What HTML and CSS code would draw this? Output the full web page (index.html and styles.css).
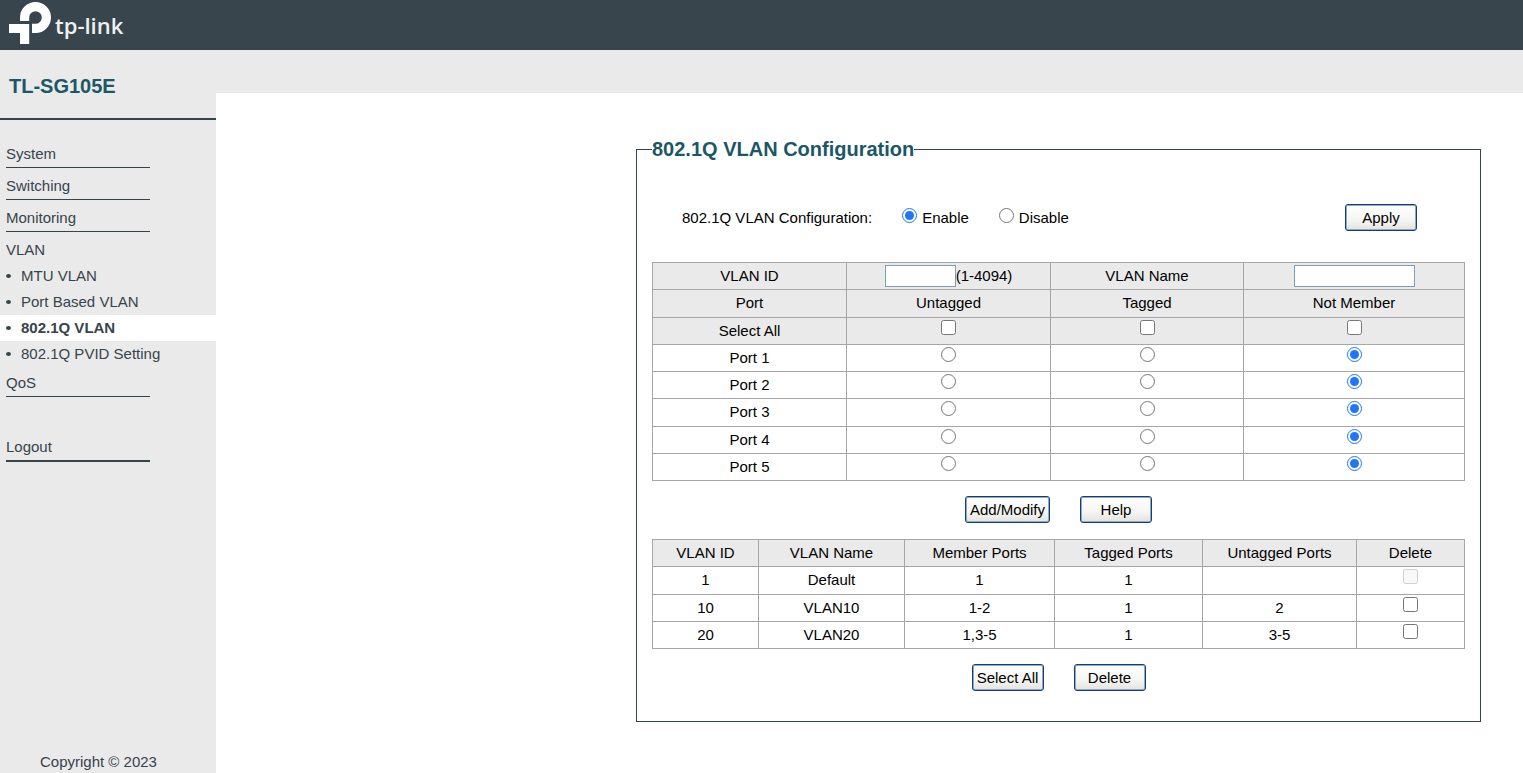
FILE: index.html
```html
<!DOCTYPE html>
<html lang="en">
<head>
<meta charset="utf-8">
<title>TL-SG105E</title>
<link rel="stylesheet" href="styles.css">
</head>
<body>
<header class="topbar">
  <svg class="logo-mark" viewBox="0 0 42 42" width="42" height="42" aria-hidden="true">
    <path fill="#fff" d="M11 19V15.500a15.500 15.500 0 1 1 15.500 15.500H23V21.800H26.500a6.300 6.300 0 1 0-6.300-6.300V19zM0 22H20.200V42H11V31H0z"/>
  </svg>
  <span class="logo-name">tp-link</span>
</header>
<div class="layout">
  <aside class="sidebar">
    <h1 class="model">TL-SG105E</h1>
    <nav class="nav">
      <a class="item" href="#">System</a>
      <a class="item" href="#">Switching</a>
      <a class="item" href="#">Monitoring</a>
      <a class="item open" href="#">VLAN</a>
      <ul class="sub">
        <li><a href="#">MTU VLAN</a></li>
        <li><a href="#">Port Based VLAN</a></li>
        <li class="current"><a href="#">802.1Q VLAN</a></li>
        <li><a href="#">802.1Q PVID Setting</a></li>
      </ul>
      <a class="item after-sub" href="#">QoS</a>
      <a class="item logout" href="#">Logout</a>
    </nav>
    <p class="copyright">Copyright © 2023</p>
  </aside>
  <main class="main">
    <div class="band"></div>
    <form class="content">
      <fieldset class="panel">
        <legend>802.1Q VLAN Configuration</legend>
        <div class="mode">
          <span class="mode-label">802.1Q VLAN Configuration:</span>
          <label class="choice"><input type="radio" name="mode" checked> Enable</label>
          <label class="choice"><input type="radio" name="mode"> Disable</label>
          <button class="btn apply" type="button">Apply</button>
        </div>
        <table class="grid ports">
          <colgroup><col class="p1"><col class="p2"><col class="p3"><col class="p4"></colgroup>
          <tbody>
            <tr class="head"><td><label for="vid">VLAN ID</label></td><td><div class="field"><input class="text short" id="vid" type="text"><span>(1-4094)</span></div></td><td><label for="vname">VLAN Name</label></td><td><div class="field"><input class="text" id="vname" type="text"></div></td></tr>
            <tr class="head"><th>Port</th><th>Untagged</th><th>Tagged</th><th>Not Member</th></tr>
            <tr class="head"><td>Select All</td><td><input type="checkbox" aria-label="All untagged"></td><td><input type="checkbox" aria-label="All tagged"></td><td><input type="checkbox" aria-label="All not member"></td></tr>
            <tr><td>Port 1</td><td><input type="radio" name="p1" aria-label="Port 1 untagged"></td><td><input type="radio" name="p1" aria-label="Port 1 tagged"></td><td><input type="radio" name="p1" aria-label="Port 1 not member" checked></td></tr>
            <tr><td>Port 2</td><td><input type="radio" name="p2" aria-label="Port 2 untagged"></td><td><input type="radio" name="p2" aria-label="Port 2 tagged"></td><td><input type="radio" name="p2" aria-label="Port 2 not member" checked></td></tr>
            <tr><td>Port 3</td><td><input type="radio" name="p3" aria-label="Port 3 untagged"></td><td><input type="radio" name="p3" aria-label="Port 3 tagged"></td><td><input type="radio" name="p3" aria-label="Port 3 not member" checked></td></tr>
            <tr><td>Port 4</td><td><input type="radio" name="p4" aria-label="Port 4 untagged"></td><td><input type="radio" name="p4" aria-label="Port 4 tagged"></td><td><input type="radio" name="p4" aria-label="Port 4 not member" checked></td></tr>
            <tr><td>Port 5</td><td><input type="radio" name="p5" aria-label="Port 5 untagged"></td><td><input type="radio" name="p5" aria-label="Port 5 tagged"></td><td><input type="radio" name="p5" aria-label="Port 5 not member" checked></td></tr>
          </tbody>
        </table>
        <div class="actions">
          <button class="btn" type="button">Add/Modify</button>
          <button class="btn" type="button">Help</button>
        </div>
        <table class="grid vlans">
          <colgroup><col class="v1"><col class="v2"><col class="v3"><col class="v4"><col class="v5"><col class="v6"></colgroup>
          <tbody>
            <tr class="head"><th>VLAN ID</th><th>VLAN Name</th><th>Member Ports</th><th>Tagged Ports</th><th>Untagged Ports</th><th>Delete</th></tr>
            <tr><td>1</td><td>Default</td><td>1</td><td>1</td><td></td><td><input type="checkbox" aria-label="Delete VLAN 1" disabled></td></tr>
            <tr><td>10</td><td>VLAN10</td><td>1-2</td><td>1</td><td>2</td><td><input type="checkbox" aria-label="Delete VLAN 10"></td></tr>
            <tr><td>20</td><td>VLAN20</td><td>1,3-5</td><td>1</td><td>3-5</td><td><input type="checkbox" aria-label="Delete VLAN 20"></td></tr>
          </tbody>
        </table>
        <div class="actions">
          <button class="btn" type="button">Select All</button>
          <button class="btn" type="button">Delete</button>
        </div>
      </fieldset>
    </form>
  </main>
</div>
</body>
</html>
```

FILE: styles.css
```css
* { box-sizing: border-box; }
body {
  margin: 0;
  min-height: 100vh;
  display: flex;
  flex-direction: column;
  font: 15px/18px "Liberation Sans", Arial, sans-serif;
  color: #000;
  background: #fff;
}
.topbar {
  display: flex;
  gap: 4px;
  height: 50px;
  padding: 2px 9px;
  background: #38454c;
}
.logo-name {
  font: 600 22px/42px "Open Sans", sans-serif;
  padding-top: 2px;
  color: #eef0f1;
}
.layout { flex: 1; display: flex; }
.sidebar {
  width: 216px;
  flex: none;
  display: flex;
  flex-direction: column;
  background: #eaeaea;
  color: #36444b;
}
.sidebar a { color: inherit; text-decoration: none; }
.model {
  margin: 0;
  height: 70px;
  padding: 24px 9px 0;
  border-bottom: 2px solid #36444b;
  font-size: 20px;
  line-height: 24px;
  color: #1b5766;
}
.nav { display: flex; flex-direction: column; padding-top: 16px; }
.item {
  width: 144px;
  height: 32px;
  margin-left: 6px;
  padding-top: 9px;
  border-bottom: 1px solid #36444b;
}
.item.open { height: 31px; border: 0; }
.item.after-sub { height: 30px; padding-top: 7px; }
.item.logout { height: 33px; margin-top: 32px; border-bottom-width: 2px; }
.sub { margin: 0; padding: 0; list-style: none; }
.sub li {
  display: flex;
  align-items: center;
  gap: 10px;
  height: 26px;
  padding-left: 6px;
}
.sub li::before {
  content: "";
  width: 5px;
  height: 4px;
  border-radius: 50%;
  background: #36444b;
}
.sub .current { background: #fff; font-weight: bold; }
.copyright { margin: auto 0 0; padding: 0 40px 2px; }
.main { flex: 1; display: flex; flex-direction: column; }
.band { height: 43px; background: #eaeaea; }
.content { display: flex; justify-content: flex-end; padding: 44px 42px 44px 16px; }
.panel {
  width: 100%;
  max-width: 845px;
  margin: 0;
  padding: 43px 15px 14px;
  border: 1px solid #36444b;
}
.panel legend {
  padding: 0;
  font-size: 20px;
  font-weight: bold;
  line-height: 24px;
  color: #1b5766;
}
.mode { display: flex; align-items: center; margin-bottom: 31px; padding: 0 48px 0 30px; }
.choice { display: flex; align-items: center; gap: 5px; margin-left: 30px; }
.choice input { margin-bottom: 5px; }
.apply { margin-left: auto; }
input[type="radio"], input[type="checkbox"] { width: 15px; height: 15px; margin: 0; accent-color: #1f75fe; }
.choice input[type="radio"] { margin-bottom: 5px; }
.grid { width: 100%; table-layout: fixed; border-collapse: collapse; }
.grid td, .grid th {
  height: 27px;
  padding: 0;
  border: 1px solid #a6a6a6;
  text-align: center;
  font-weight: normal;
}
.grid td > input { display: block; margin: 0 auto 7px; }
.grid .head { background: #eaeaea; }
.ports { height: 219px; }
.vlans { height: 110px; }
.p1 { width: 194px; } .p2 { width: 204px; } .p3 { width: 193px; } .p4 { width: 221px; }
.v1 { width: 106px; } .v2 { width: 146px; } .v3 { width: 150px; } .v4 { width: 148px; } .v5 { width: 154px; } .v6 { width: 108px; }
.field { display: flex; align-items: center; justify-content: center; }
.text {
  width: 121px;
  height: 22px;
  padding: 1px 2px;
  border: 1px solid #7f9db9;
  background: #fff;
  font: inherit;
}
.text.short { width: 71px; }
.actions { display: flex; justify-content: center; gap: 30px; padding: 15px 0 16px; }
.btn {
  min-width: 72px;
  height: 27px;
  padding: 0 4px;
  border: 1px solid #0f3f76;
  border-radius: 3px;
  box-shadow: inset 0 0 0 1px #8fa9c6;
  background: linear-gradient(#fff, #f5f5f3 60%, #e3e2de);
  font: inherit;
  color: #000;
}
```
